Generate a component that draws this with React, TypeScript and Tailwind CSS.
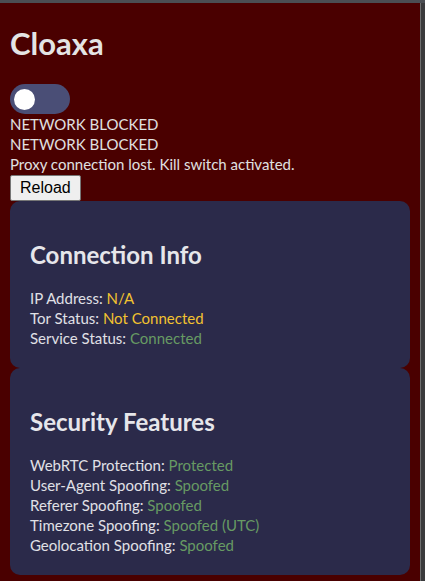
const rows1 = [
  { label: 'IP Address:', value: 'N/A', tone: 'warn' },
  { label: 'Tor Status:', value: 'Not Connected', tone: 'warn' },
  { label: 'Service Status:', value: 'Connected', tone: 'ok' },
];

const rows2 = [
  { label: 'WebRTC Protection:', value: 'Protected', tone: 'ok' },
  { label: 'User-Agent Spoofing:', value: 'Spoofed', tone: 'ok' },
  { label: 'Referer Spoofing:', value: 'Spoofed', tone: 'ok' },
  { label: 'Timezone Spoofing:', value: 'Spoofed (UTC)', tone: 'ok' },
  { label: 'Geolocation Spoofing:', value: 'Spoofed', tone: 'ok' },
];

type Row = { label: string; value: string; tone: string };

function Card({ title, rows }: { title: string; rows: Row[] }) {
  return (
    <div className="rounded-[10px] bg-[#2b2a4a] p-5">
      <h2 className="mt-[18px] mb-[17px] text-[24px] leading-[32px] font-bold text-[#e6e6ea]">{title}</h2>
      <div>
        {rows.map((r) => (
          <div key={r.label} className="text-[15px] leading-[20px] text-[#e0e0e6]">
            {r.label}{' '}
            <span className={r.tone === 'warn' ? 'text-[#f2c230]' : 'text-[#679a63]'}>{r.value}</span>
          </div>
        ))}
      </div>
    </div>
  );
}

export default function App() {
  return (
    <div className="flex h-[581px] w-[425px] flex-col overflow-hidden bg-[#3a3a3c] font-['Lato',sans-serif]">
      <div className="h-[3px] shrink-0 bg-[#4b4e53]" />
      <div className="flex flex-1">
        <main className="w-[420px] bg-[#4a0000] px-[10px] pt-5 text-[#e0e0e0]">
          <h1 className="mb-[21px] text-[31px] leading-[40px] font-bold text-[#e4e4e4]">Cloaxa</h1>
          <div className="flex h-[30px] w-[60px] items-center rounded-full bg-[#4a4e76] pl-[4px]">
            <div className="h-[21px] w-[21px] rounded-full bg-white" />
          </div>
          <div className="text-[15px] leading-[20px]">
            <div>NETWORK BLOCKED</div>
            <div>NETWORK BLOCKED</div>
            <div>Proxy connection lost. Kill switch activated.</div>
          </div>
          <button className="mt-px h-[26px] rounded-[2px] border border-[#767676] bg-[#efefef] px-[9px] font-['Liberation_Sans',Arial,sans-serif] text-[16px] text-black">
            Reload
          </button>
          <Card title="Connection Info" rows={rows1} />
          <Card title="Security Features" rows={rows2} />
        </main>
        <div className="w-px bg-[#6e6e6e]" />
        <div className="flex-1 bg-[#3a3a3c]" />
      </div>
    </div>
  );
}
